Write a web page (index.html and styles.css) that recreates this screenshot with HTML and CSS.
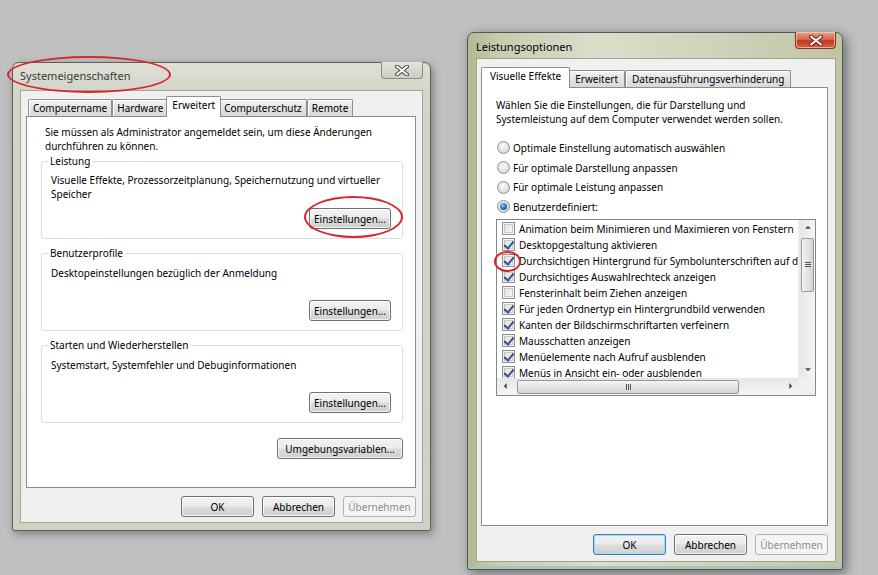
FILE: index.html
```html
<!DOCTYPE html>
<html lang="de">
<head>
<meta charset="utf-8">
<title>Systemeigenschaften</title>
<link rel="stylesheet" href="styles.css">
</head>
<body>
<div class="win win-sys">
  <div class="titlebar">
    <span class="title">Systemeigenschaften</span>
    <div class="close close-inactive"><svg width="14" height="11" viewBox="0 0 14 11"><path d="M2 1.5L12 9.5M12 1.5L2 9.5" stroke="#4a4a4a" stroke-width="4" stroke-linecap="round"/><path d="M2 1.5L12 9.5M12 1.5L2 9.5" stroke="#fff" stroke-width="2" stroke-linecap="round"/></svg></div>
  </div>
  <div class="client">
    <div class="tabs">
      <div class="tab">Computername</div>
      <div class="tab">Hardware</div>
      <div class="tab active">Erweitert</div>
      <div class="tab">Computerschutz</div>
      <div class="tab">Remote</div>
    </div>
    <div class="panel panel-sys">
      <p class="intro">Sie müssen als Administrator angemeldet sein, um diese Änderungen<br>durchführen zu können.</p>
      <div class="group">
        <span class="group-label">Leistung</span>
        <p class="group-text">Visuelle Effekte, Prozessorzeitplanung, Speichernutzung und virtueller<br>Speicher</p>
        <button class="btn btn-settings">Einstellungen...</button>
      </div>
      <div class="group">
        <span class="group-label">Benutzerprofile</span>
        <p class="group-text">Desktopeinstellungen bezüglich der Anmeldung</p>
        <button class="btn btn-settings">Einstellungen...</button>
      </div>
      <div class="group">
        <span class="group-label">Starten und Wiederherstellen</span>
        <p class="group-text">Systemstart, Systemfehler und Debuginformationen</p>
        <button class="btn btn-settings">Einstellungen...</button>
      </div>
      <button class="btn btn-env">Umgebungsvariablen...</button>
    </div>
    <div class="dlg-buttons">
      <button class="btn">OK</button>
      <button class="btn">Abbrechen</button>
      <button class="btn" disabled>Übernehmen</button>
    </div>
  </div>
</div>

<div class="win win-perf">
  <div class="titlebar">
    <span class="title">Leistungsoptionen</span>
    <div class="close close-active"><svg width="14" height="11" viewBox="0 0 14 11"><path d="M2 1.5L12 9.5M12 1.5L2 9.5" stroke="#6b2a1c" stroke-width="4" stroke-linecap="round"/><path d="M2 1.5L12 9.5M12 1.5L2 9.5" stroke="#fff" stroke-width="2" stroke-linecap="round"/></svg></div>
  </div>
  <div class="client">
    <div class="tabs">
      <div class="tab active">Visuelle Effekte</div>
      <div class="tab">Erweitert</div>
      <div class="tab">Datenausführungsverhinderung</div>
    </div>
    <div class="panel panel-perf">
      <p class="intro">Wählen Sie die Einstellungen, die für Darstellung und<br>Systemleistung auf dem Computer verwendet werden sollen.</p>
      <div class="radios">
        <div class="radio-row"><span class="radio"></span>Optimale Einstellung automatisch auswählen</div>
        <div class="radio-row"><span class="radio"></span>Für optimale Darstellung anpassen</div>
        <div class="radio-row"><span class="radio"></span>Für optimale Leistung anpassen</div>
        <div class="radio-row"><span class="radio checked"></span>Benutzerdefiniert:</div>
      </div>
      <div class="listbox">
        <div class="list-items">
          <div class="item"><span class="cb"></span>Animation beim Minimieren und Maximieren von Fenstern</div>
          <div class="item"><span class="cb on"></span>Desktopgestaltung aktivieren</div>
          <div class="item"><span class="cb on"></span>Durchsichtigen Hintergrund für Symbolunterschriften auf dem Desktop</div>
          <div class="item"><span class="cb on"></span>Durchsichtiges Auswahlrechteck anzeigen</div>
          <div class="item"><span class="cb"></span>Fensterinhalt beim Ziehen anzeigen</div>
          <div class="item"><span class="cb on"></span>Für jeden Ordnertyp ein Hintergrundbild verwenden</div>
          <div class="item"><span class="cb on"></span>Kanten der Bildschirmschriftarten verfeinern</div>
          <div class="item"><span class="cb on"></span>Mausschatten anzeigen</div>
          <div class="item"><span class="cb on"></span>Menüelemente nach Aufruf ausblenden</div>
          <div class="item"><span class="cb on"></span>Menüs in Ansicht ein- oder ausblenden</div>
        </div>
        <div class="vscroll">
          <span class="arrow arrow-up"></span>
          <span class="vthumb"><span class="grip-h"></span></span>
          <span class="vtrack"></span>
          <span class="arrow arrow-down"></span>
        </div>
        <div class="hscroll">
          <span class="arrow arrow-left"></span>
          <span class="hthumb"><span class="grip-v"></span></span>
          <span class="htrack"></span>
          <span class="arrow arrow-right"></span>
        </div>
        <div class="corner"></div>
      </div>
    </div>
    <div class="dlg-buttons">
      <button class="btn btn-default">OK</button>
      <button class="btn">Abbrechen</button>
      <button class="btn" disabled>Übernehmen</button>
    </div>
  </div>
</div>

<div class="mark mark-title"></div>
<div class="mark mark-btn"></div>
<div class="mark mark-cb"></div>
</body>
</html>
```

FILE: styles.css
```css
* { box-sizing: border-box; }
html, body { margin: 0; padding: 0; }
body {
  width: 878px;
  height: 575px;
  position: relative;
  overflow: hidden;
  background: #c0c0c0;
  font-family: "Noto Sans", "Open Sans", sans-serif;
  font-size: 10px;
  line-height: 14px;
  color: #000;
}
p { margin: 0; }

/* windows */
.win {
  position: absolute;
  display: flex;
  flex-direction: column;
  border: 1px solid #5c5f57;
  border-radius: 7px 7px 2px 2px;
}
.win-sys {
  left: 12px; top: 62px; width: 419px; height: 469px;
  padding: 0 7px 7px 7px;
  background: linear-gradient(180deg, #dedfd6 0px, #d3d5c9 28px, #cfd1c4 100%);
  box-shadow: 2px 3px 8px rgba(0,0,0,0.35);
}
.win-perf {
  left: 467px; top: 32px; width: 376px; height: 538px;
  padding: 0 6px 7px 8px;
  background:
    linear-gradient(90deg, #b3b892 0px, #c9cbb0 30px, #dcddcb 130px, #cfd1b9 260px, #bfc4a4 376px);
  border-color: #4d5a52;
  box-shadow: 3px 3px 12px rgba(0,0,0,0.45), inset 0 -3px 0 #a9c3bb;
}
.titlebar {
  display: flex;
  justify-content: space-between;
  align-items: flex-start;
}
.win-sys .titlebar { height: 27px; }
.win-perf .titlebar { height: 25px; }
.title {
  font-size: 11px;
  line-height: 16px;
}
.win-sys .title { padding: 5px 0 0 0; color: #3a3a3a; }
.win-perf .title { padding: 6px 0 0 0; color: #000; }

.close {
  width: 42px;
  height: 17px;
  border-radius: 0 0 4px 4px;
  display: flex;
  align-items: center;
  justify-content: center;
  margin-top: -1px;
}
.close-inactive {
  background: linear-gradient(#e4e4dc, #cbcdc0);
  border: 1px solid #8b8d82;
  border-top: none;
}
.close-active {
  width: 41px;
  background: linear-gradient(#e5a08a 0%, #d76a4d 45%, #c1391f 55%, #d2634a 100%);
  border: 1px solid #7a3a2a;
  border-top: none;
  box-shadow: inset 0 0 0 1px rgba(255,220,200,0.6);
}

.client {
  flex: 1;
  display: flex;
  flex-direction: column;
  background: #f0f0f0;
  border: 1px solid #a3a597;
}
.win-sys .client { padding: 5px 6px 5px 5px; }
.win-perf .client { padding: 8px 7px 6px 4px; border-color: #9fa48c; }

/* tabs */
.tabs {
  display: flex;
  align-items: flex-end;
  height: 20px;
  padding-left: 2px;
  position: relative;
  z-index: 1;
}
.tab {
  height: 17px;
  padding: 0 4px;
  line-height: 16px;
  border: 1px solid #8c8e94;
  border-bottom: none;
  border-radius: 2px 2px 0 0;
  background: linear-gradient(#f3f3f3, #e3e3e3 50%, #d8d8d8);
  box-shadow: inset 1px 1px 0 #fff;
  white-space: nowrap;
}
.win-perf .tab { padding: 0 6px; }
.tab.active {
  height: 21px;
  margin: 0 -2px -1px -2px;
  padding: 0 5px;
  line-height: 17px;
  background: #fff;
  box-shadow: none;
  position: relative;
  z-index: 2;
}
.win-perf .tab.active { padding: 0 8px; }

.panel {
  flex: 1;
  background: #fff;
  border: 1px solid #898c95;
  display: flex;
  flex-direction: column;
}
.panel-sys { padding: 8px 12px 0 14px; }
.panel-perf { padding: 10px 12px 0 14px; }
.panel-sys .intro { margin-left: 4px; }

/* group boxes */
.group {
  height: 78px;
  margin-top: 8px;
  border: 1px solid #d5dfe5;
  border-radius: 3px;
  display: flex;
  flex-direction: column;
  padding: 0 11px 9px 9px;
}
.group + .group { margin-top: 14px; }
.group-label {
  align-self: flex-start;
  margin: -8px 0 0 -3px;
  padding: 0 2px;
  background: #fff;
  line-height: 14px;
}
.group-text { margin-top: 5px; }
.group + .group .group-text { margin-top: 6px; }

/* buttons */
.btn {
  height: 21px;
  min-width: 73px;
  padding: 0 4px;
  font-family: inherit;
  font-size: 10px;
  line-height: 18px;
  color: #000;
  border: 1px solid #707070;
  border-radius: 3px;
  background: linear-gradient(#f2f2f2 0%, #ebebeb 48%, #dddddd 52%, #cfcfcf 100%);
  box-shadow: inset 0 0 0 1px rgba(255,255,255,0.75);
  white-space: nowrap;
}
.btn:disabled {
  color: #8d8d8d;
  border-color: #adb2b5;
  background: #f4f4f4;
  box-shadow: none;
}
.btn-default {
  border-color: #3c7fb1;
  box-shadow: inset 0 0 0 1px #a7d9f5;
}
.btn-settings {
  margin-top: auto;
  align-self: flex-end;
  width: 82px;
}
.btn-env {
  align-self: flex-end;
  margin: 15px 0 0 0;
  width: 126px;
}
.dlg-buttons {
  display: flex;
  justify-content: flex-end;
  gap: 8px;
  margin-top: 8px;
}

/* radios */
.radios { margin-top: 12px; }
.radio-row {
  height: 19.7px;
  display: flex;
  align-items: center;
  white-space: nowrap;
}
.radio {
  width: 13px;
  height: 13px;
  border-radius: 50%;
  border: 1px solid #8f8f8f;
  background: radial-gradient(circle at 45% 40%, #fdfdfd 0%, #e6e6e6 45%, #c9c9c9 100%);
  margin: 0 3px 0 1px;
  flex: none;
  display: flex;
  align-items: center;
  justify-content: center;
}
.radio.checked::after {
  content: "";
  width: 7px;
  height: 7px;
  border-radius: 50%;
  background: radial-gradient(circle at 40% 35%, #8cd0ff 0%, #2a7dd1 45%, #0c3f7a 100%);
}

/* listbox */
.listbox {
  margin-top: 2px;
  width: 320px;
  height: 177px;
  border: 1px solid #828790;
  display: grid;
  grid-template-columns: 1fr 17px;
  grid-template-rows: 1fr 17px;
  background: #fff;
}
.list-items {
  overflow: hidden;
  padding: 1px 0 0 5px;
}
.item {
  height: 16px;
  display: flex;
  align-items: center;
  white-space: nowrap;
}
.cb {
  width: 13px;
  height: 13px;
  flex: none;
  margin-right: 4px;
  border: 1px solid #8f8f8f;
  background: linear-gradient(135deg, #dcdcdc, #fcfcfc);
  box-shadow: inset 0 0 0 1px #f4f4f4, inset 0 0 0 2px #c9c9c9;
  position: relative;
}
.cb.on::after {
  content: "";
  position: absolute;
  left: 3px;
  top: 0px;
  width: 4px;
  height: 8px;
  border: solid #3a5291;
  border-width: 0 2px 2px 0;
  transform: rotate(40deg);
}
.vscroll {
  display: flex;
  flex-direction: column;
  background: linear-gradient(90deg, #e6e6e6, #f5f5f5);
  border-left: 1px solid #f0f0f0;
}
.hscroll {
  display: flex;
  background: linear-gradient(#e6e6e6, #f5f5f5);
  align-items: stretch;
}
.corner { background: #f0f0f0; }
.vtrack, .htrack { flex: 1; }
.arrow {
  flex: none;
  width: 17px;
  height: 17px;
  position: relative;
}
.arrow::after {
  content: "";
  position: absolute;
  left: 50%;
  top: 50%;
  width: 0; height: 0;
  border-style: solid;
  border-color: transparent;
}
.arrow-up::after { border-width: 0 3px 3px 3px; border-bottom-color: #4d4d4d; transform: translate(-50%, -75%); }
.arrow-down::after { border-width: 3px 3px 0 3px; border-top-color: #4d4d4d; transform: translate(-50%, -25%); }
.arrow-left::after { border-width: 3px 3px 3px 0; border-right-color: #4d4d4d; transform: translate(-75%, -50%); }
.arrow-right::after { border-width: 3px 0 3px 3px; border-left-color: #4d4d4d; transform: translate(-25%, -50%); }
.vthumb {
  height: 54px;
  margin: 1px 1px 0 2px;
  border: 1px solid #979797;
  border-radius: 2px;
  background: linear-gradient(90deg, #f5f5f5, #e3e3e3 50%, #d4d4d4);
  display: flex;
  align-items: center;
  justify-content: center;
}
.hthumb {
  width: 222px;
  margin: 2px 0 1px 3px;
  border: 1px solid #979797;
  border-radius: 2px;
  background: linear-gradient(#f5f5f5, #e3e3e3 50%, #d4d4d4);
  display: flex;
  align-items: center;
  justify-content: center;
}
.grip-h {
  width: 6px;
  height: 5px;
  border-top: 1px solid #555;
  border-bottom: 1px solid #555;
  position: relative;
}
.grip-h::after {
  content: "";
  position: absolute;
  left: 0; right: 0; top: 1px;
  border-top: 1px solid #555;
}
.grip-v {
  width: 5px;
  height: 6px;
  border-left: 1px solid #555;
  border-right: 1px solid #555;
  position: relative;
}
.grip-v::after {
  content: "";
  position: absolute;
  top: 0; bottom: 0; left: 1px;
  border-left: 1px solid #555;
}

/* red annotation ellipses */
.mark {
  position: absolute;
  border: 2.5px solid #d8262c;
  border-radius: 50%;
  z-index: 10;
}
.mark-title { left: 7px; top: 56px; width: 164px; height: 37px; }
.mark-btn { left: 304px; top: 196px; width: 99px; height: 42px; }
.mark-cb { left: 494px; top: 251px; width: 27px; height: 21px; }
```
